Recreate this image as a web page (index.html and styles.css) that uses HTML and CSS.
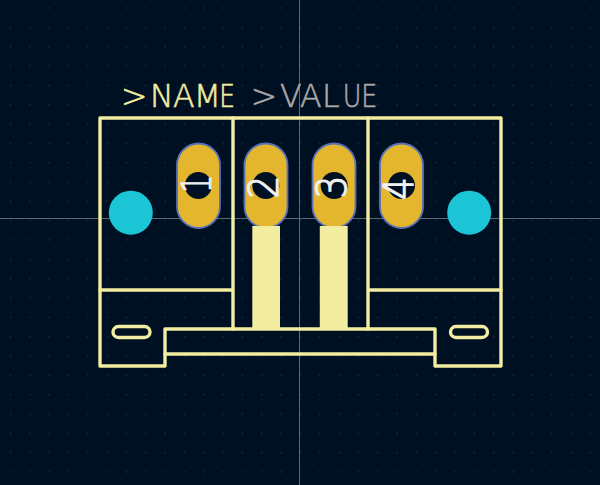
FILE: index.html
```html
<!DOCTYPE html>
<html lang="en">
<head>
<meta charset="utf-8">
<title>Footprint</title>
<link rel="stylesheet" href="styles.css">
</head>
<body>
<svg class="board" width="600" height="485" viewBox="0 0 600 485" xmlns="http://www.w3.org/2000/svg">
  <defs>
    <pattern id="grid" x="9.8" y="7.3" width="19.33" height="19.33" patternUnits="userSpaceOnUse">
      <rect class="grid-dot" width="1.4" height="1.4"/>
    </pattern>
  </defs>
  <rect class="bg" width="600" height="485"/>
  <rect class="grid" width="600" height="485" fill="url(#grid)"/>

  <line class="cursor" x1="299.5" y1="0" x2="299.5" y2="485"/>
  <line class="cursor" x1="0" y1="218.5" x2="600" y2="218.5"/>

  <text class="label label-name" y="107"><tspan x="121 150 173 193.7">&gt;NAM</tspan><tspan x="219.3" textLength="15.8" lengthAdjust="spacingAndGlyphs">E</tspan></text>
  <text class="label label-value" y="107"><tspan x="250.7 280 300 322">&gt;VAL</tspan><tspan x="342.7" textLength="34.8" lengthAdjust="spacingAndGlyphs">UE</tspan></text>

  <path class="silk" d="M100 118H501V366H435V329H165V366H100Z"/>
  <path class="silk" d="M233 118V329M368 118V329M100 290H233M368 290H501M165 354H435"/>
  <rect class="silk" x="113" y="326.5" width="37" height="11" rx="5.5"/>
  <rect class="silk" x="450.5" y="326.5" width="37" height="11" rx="5.5"/>

  <circle class="via" cx="130.8" cy="212.7" r="22"/>
  <circle class="via" cx="469.2" cy="212.7" r="22"/>

  <g class="pad-group">
    <rect class="pad" x="177" y="143.5" width="43" height="84.5" rx="21.5"/>
    <circle class="hole" cx="198.3" cy="185.5" r="13.5"/>
    <text class="pad-num" transform="translate(211 193) rotate(-90) scale(.72 1)">1</text>
  </g>
  <g class="pad-group">
    <rect class="pad" x="244.5" y="143.5" width="43" height="84.5" rx="21.5"/>
    <circle class="hole" cx="265.8" cy="185.5" r="13.5"/>
    <text class="pad-num" transform="translate(278 198.5) rotate(-90) scale(.9 1)">2</text>
  </g>
  <g class="pad-group">
    <rect class="pad" x="312.5" y="143.5" width="43" height="84.5" rx="21.5"/>
    <circle class="hole" cx="334.2" cy="185.5" r="13.5"/>
    <text class="pad-num" transform="translate(346 198.5) rotate(-90) scale(.9 1)">3</text>
  </g>
  <g class="pad-group">
    <rect class="pad" x="380" y="143.5" width="43" height="84.5" rx="21.5"/>
    <circle class="hole" cx="401.5" cy="185.5" r="13.5"/>
    <text class="pad-num" transform="translate(413 200) rotate(-90) scale(.9 1)">4</text>
  </g>

  <rect class="lead" x="252.3" y="226" width="27.7" height="103"/>
  <rect class="lead" x="319.8" y="226" width="27.9" height="103"/>
</svg>
</body>
</html>
```

FILE: styles.css
```css
html, body {
  margin: 0;
  padding: 0;
  background: #001023;
  overflow: hidden;
}

.board {
  display: block;
}

.bg {
  fill: #001023;
}

.grid-dot {
  fill: #1f2e40;
}

.cursor {
  stroke: #5e6772;
  stroke-width: 1;
}

.label {
  font-family: "DejaVu Sans", "Liberation Sans", sans-serif;
  font-weight: 200;
  font-size: 31.5px;
  stroke-width: 0.6;
}

.label-name {
  fill: #f2eda1;
  stroke: #f2eda1;
}

.label-value {
  fill: #a9a9a9;
  stroke: #a9a9a9;
}

.lead {
  fill: #f2eda1;
}

.silk {
  fill: none;
  stroke: #f2eda1;
  stroke-width: 3.4;
  stroke-linejoin: round;
  stroke-linecap: round;
}

.via {
  fill: #1cc5d6;
}

.pad {
  fill: #e4b62d;
  stroke: #5672b8;
  stroke-width: 1.8;
}

.hole {
  fill: #001023;
}

.pad-num {
  font-family: "DejaVu Sans", "Liberation Sans", sans-serif;
  font-weight: 200;
  font-size: 40px;
  fill: #f0f0f0;
  stroke: #f0f0f0;
  stroke-width: 1.3;
  stroke-linejoin: round;
}
```
